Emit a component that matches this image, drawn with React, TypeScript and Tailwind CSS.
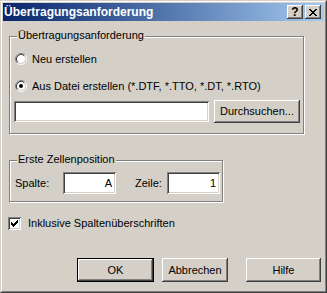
import React from 'react';

const raised =
  'bg-[#d4d0c8] shadow-[inset_-1px_-1px_#404040,inset_1px_1px_#ffffff,inset_-2px_-2px_#808080,inset_2px_2px_#d4d0c8]';
const sunken =
  'bg-white shadow-[inset_1px_1px_#808080,inset_-1px_-1px_#ffffff,inset_2px_2px_#404040,inset_-2px_-2px_#d4d0c8]';

const GroupBox: React.FC<{ label: string; className: string; children: React.ReactNode }> = ({
  label,
  className,
  children,
}) => (
  <div className={`relative border border-[#808080] shadow-[inset_1px_1px_#ffffff,1px_1px_#ffffff] ${className}`}>
    <span className="absolute left-[7px] top-[-8px] bg-[#d4d0c8] px-[1px] leading-[13px]">{label}</span>
    {children}
  </div>
);

const Radio: React.FC<{ checked?: boolean }> = ({ checked }) => (
  <svg width="12" height="12" viewBox="0 0 12 12" className="shrink-0">
    <circle cx="6" cy="6" r="4" fill="#ffffff" />
    <path d="M2.11 9.89 A5.5 5.5 0 0 1 9.89 2.11" fill="none" stroke="#808080" />
    <path d="M9.89 2.11 A5.5 5.5 0 0 1 2.11 9.89" fill="none" stroke="#ffffff" />
    <path d="M2.82 9.18 A4.5 4.5 0 0 1 9.18 2.82" fill="none" stroke="#404040" />
    <path d="M9.18 2.82 A4.5 4.5 0 0 1 2.82 9.18" fill="none" stroke="#d4d0c8" />
    {checked && <circle cx="6" cy="6" r="2" fill="#000000" />}
  </svg>
);

// classic 7x7 pixel check mark, one 3px column per x
const checkCols = [2, 3, 4, 3, 2, 1, 0];

const Checkbox: React.FC = () => (
  <div className={`w-[13px] h-[13px] shrink-0 ${sunken}`}>
    <svg width="13" height="13" viewBox="0 0 13 13" shapeRendering="crispEdges">
      {checkCols.map((y, i) => (
        <rect key={i} x={3 + i} y={3 + y} width="1" height="3" fill="#000000" />
      ))}
    </svg>
  </div>
);

// pixel X for the close button
const xRows = [
  [0, 1, 6, 7],
  [1, 2, 5, 6],
  [2, 3, 4, 5],
  [3, 4],
  [2, 3, 4, 5],
  [1, 2, 5, 6],
  [0, 1, 6, 7],
];

const App: React.FC = () => {
  return (
    <div className="w-[327px] h-[293px] font-['Liberation_Sans',Arial,sans-serif] text-[11px] leading-[13px] text-black">
      <div className="w-full h-full bg-[#d4d0c8] border border-t-[#d4d0c8] border-l-[#d4d0c8] border-r-[#404040] border-b-[#404040]">
        <div className="w-full h-full border border-t-white border-l-white border-r-[#808080] border-b-[#808080] p-[1px] flex flex-col">
          {/* title bar */}
          <div className="h-[18px] flex items-center bg-linear-to-r from-[#0a246a] to-[#a6caf0] pl-[1px] pr-[3px]">
            <span className="text-white font-bold text-[12px] leading-[14px]">Übertragungsanforderung</span>
            <div className="ml-auto flex gap-[2px]">
              <div className={`w-[16px] h-[14px] flex items-center justify-center font-bold text-[12px] leading-none ${raised}`}>
                ?
              </div>
              <div className={`w-[16px] h-[14px] flex items-center justify-center ${raised}`}>
                <svg width="8" height="7" viewBox="0 0 8 7" shapeRendering="crispEdges">
                  {xRows.map((row, y) =>
                    row.map((x) => <rect key={`${x}-${y}`} x={x} y={y} width="1" height="1" fill="#000000" />)
                  )}
                </svg>
              </div>
            </div>
          </div>

          {/* body */}
          <div className="flex flex-col">
            <GroupBox label="Übertragungsanforderung" className="ml-[6px] mt-[15px] w-[295px] h-[98px] pl-[4px] pt-[14px]">
              <div className="flex items-center h-[16px] pl-[1px] gap-[5px]">
                <Radio />
                <span>Neu erstellen</span>
              </div>
              <div className="flex items-center h-[16px] pl-[1px] gap-[5px] mt-[11px]">
                <Radio checked />
                <span>Aus Datei erstellen (*.DTF, *.TTO, *.DT, *.RTO)</span>
              </div>
              <div className="flex items-center gap-[5px] mt-[6px] h-[23px]">
                <div className={`w-[195px] h-[21px] ${sunken}`} />
                <button className={`w-[86px] h-[23px] ${raised}`}>Durchsuchen...</button>
              </div>
            </GroupBox>

            <GroupBox label="Erste Zellenposition" className="ml-[6px] mt-[26px] w-[214px] h-[42px] pl-[5px] pt-[11px]">
              <div className="flex items-center h-[22px]">
                <span className="w-[48px]">Spalte:</span>
                <div className={`w-[53px] h-[22px] flex items-center justify-end pr-[4px] ${sunken}`}>A</div>
                <span className="ml-[19px] w-[32px]">Zeile:</span>
                <div className={`w-[53px] h-[22px] flex items-center justify-end pr-[4px] ${sunken}`}>1</div>
              </div>
            </GroupBox>

            <div className="flex items-center h-[16px] mt-[13px] ml-[5px] gap-[7px]">
              <Checkbox />
              <span>Inklusive Spaltenüberschriften</span>
            </div>

            <div className="flex justify-end pr-[3px] mt-[27px]">
              <button className={`w-[77px] h-[24px] border border-black ${raised}`}>OK</button>
              <button className={`ml-[8px] w-[66px] h-[24px] ${raised}`}>Abbrechen</button>
              <button className={`ml-[18px] w-[75px] h-[24px] ${raised}`}>Hilfe</button>
            </div>
          </div>
        </div>
      </div>
    </div>
  );
};

export default App;
